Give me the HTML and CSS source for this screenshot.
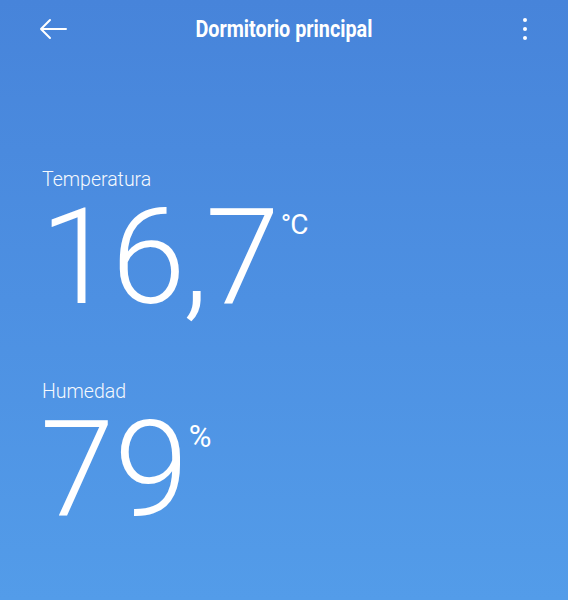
FILE: index.html
```html
<!DOCTYPE html>
<html lang="es">
<head>
<meta charset="utf-8">
<title>Dormitorio principal</title>
<link rel="stylesheet" href="styles.css">
</head>
<body>
<div class="screen">
  <header class="topbar">
    <svg class="back" width="30" height="22" viewBox="0 0 30 22">
      <path d="M28 11H3M12 2L3 11L12 20" fill="none" stroke="#fff" stroke-width="2" stroke-linecap="round" stroke-linejoin="round"/>
    </svg>
    <h1 class="title"><span class="title-text">Dormitorio principal</span></h1>
    <svg class="more" width="8" height="24" viewBox="0 0 8 24">
      <circle cx="4" cy="3" r="2" fill="#fff"/>
      <circle cx="4" cy="12" r="2" fill="#fff"/>
      <circle cx="4" cy="21" r="2" fill="#fff"/>
    </svg>
  </header>
  <main class="content">
    <section class="reading temp">
      <div class="label">Temperatura</div>
      <div class="value-row">
        <span class="value value-temp">16,7</span><span class="unit unit-c">°C</span>
      </div>
    </section>
    <section class="reading hum">
      <div class="label">Humedad</div>
      <div class="value-row">
        <span class="value">79</span><span class="unit unit-p">%</span>
      </div>
    </section>
  </main>
</div>
</body>
</html>
```
FILE: styles.css
```css
html, body {
  margin: 0;
  padding: 0;
}
body {
  width: 568px;
  height: 600px;
  overflow: hidden;
  font-family: Roboto, "Noto Sans", sans-serif;
  color: #fff;
}
.screen {
  height: 600px;
  background: linear-gradient(180deg, #4784da 0%, #4d90e2 50%, #539ce9 100%);
  display: flex;
  flex-direction: column;
}
.topbar {
  height: 58px;
  display: grid;
  grid-template-columns: 40px 1fr 40px;
  align-items: center;
  padding: 0 38px;
}
.back {
  display: block;
}
.title {
  margin: 0;
  text-align: center;
  font-family: Roboto, "Liberation Sans", sans-serif;
  font-weight: 700;
  font-size: 23px;
  white-space: nowrap;
}
.title-text {
  display: inline-block;
  transform: scaleX(0.86);
}
.more {
  display: block;
  justify-self: end;
  margin-right: 1px;
}
.content {
  padding: 111px 0 0 42px;
}
.label {
  font-weight: 300;
  font-size: 19.5px;
  line-height: 22px;
  opacity: 0.95;
}
.value-row {
  display: flex;
  align-items: flex-start;
}
.value {
  font-weight: 300;
  font-size: 134px;
  line-height: 134px;
  margin-left: -2px;
}
.value-temp {
  letter-spacing: -3px;
}
.unit {
  font-weight: 400;
}
.unit-c {
  font-size: 28px;
  margin-top: 17px;
  margin-left: 4px;
  letter-spacing: -1px;
}
.unit-p {
  font-size: 31px;
  margin-top: 15px;
  margin-left: 0;
}
.hum {
  margin-top: 56px;
}
```
